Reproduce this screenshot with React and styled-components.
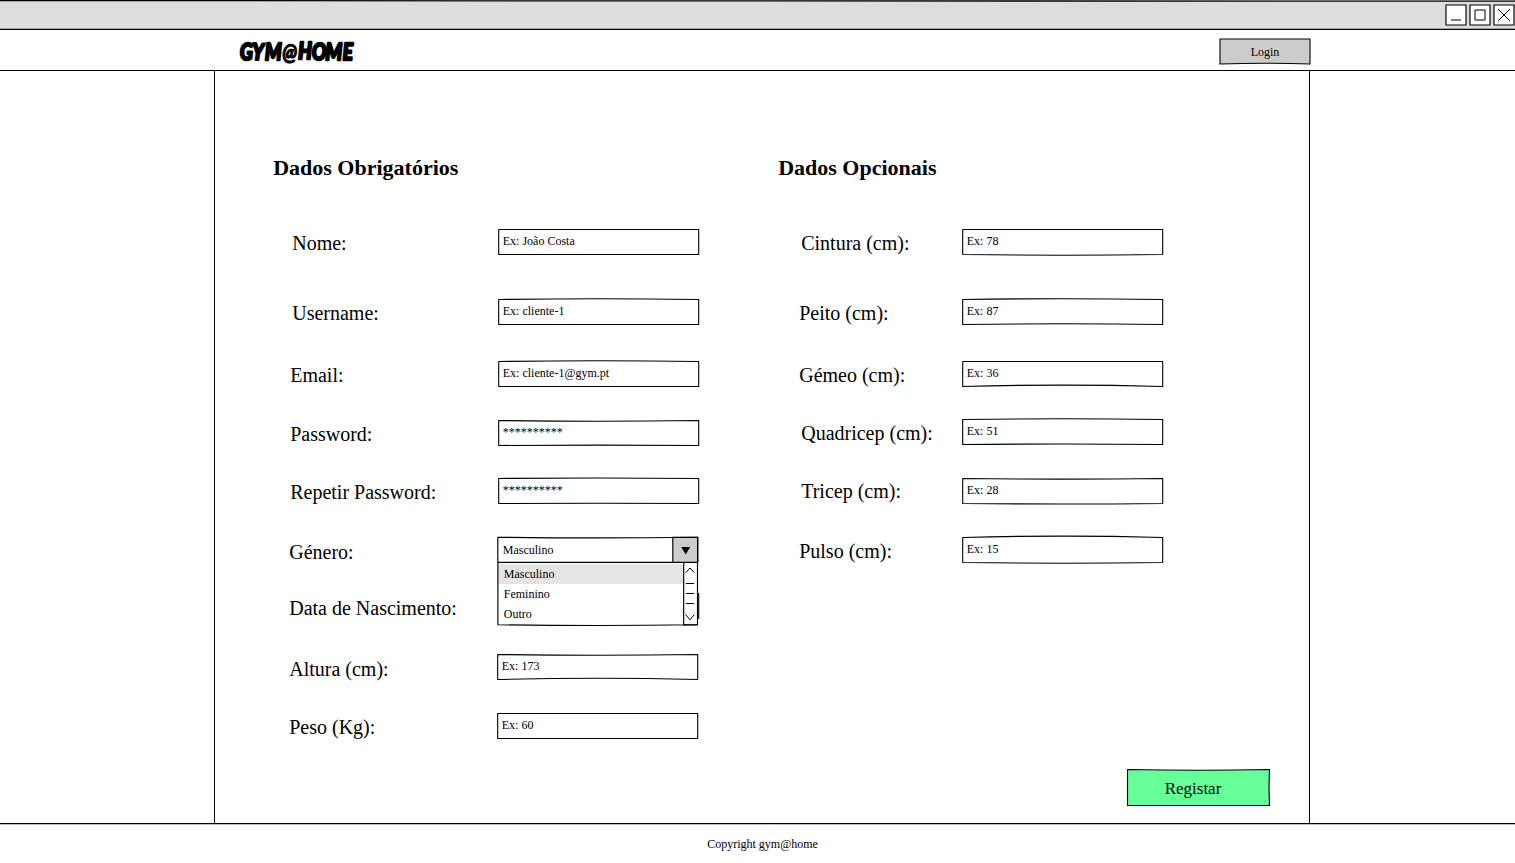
import React from "react";
import styled, { createGlobalStyle } from "styled-components";

const GlobalStyle = createGlobalStyle`
  * { box-sizing: border-box; }
  body {
    margin: 0;
    background: #fff;
    color: #000;
    font-family: "Liberation Serif", "Times New Roman", serif;
    overflow: hidden;
  }
`;

const Page = styled.div`
  display: flex;
  flex-direction: column;
  width: 1515px;
  height: 863px;
`;

const TitleBar = styled.div`
  position: relative;
  flex: none;
  display: flex;
  justify-content: flex-end;
  gap: 2px;
  height: 30px;
  padding-top: 4px;
  background: #ddd;
`;

const Ink = styled.svg`
  position: absolute;
  inset: 0;
  width: 100%;
  height: 100%;
  overflow: visible;
  pointer-events: none;
  fill: none;
  stroke: #000;
  stroke-width: ${(p) => p.$weight || 1};
`;

const WindowButton = styled.button`
  position: relative;
  width: 22px;
  height: 22px;
  padding: 0;
  border: 0;
  background: none;

  svg {
    display: block;
    fill: none;
    stroke: #000;
    stroke-width: 1.15;
  }
`;

const Header = styled.header`
  flex: none;
  display: flex;
  justify-content: space-between;
  height: 41px;
  padding: 8px 204px 0 239px;
  border-bottom: 1px solid #000;
`;

const Logo = styled.svg`
  display: block;
  width: 120px;
  height: 30px;
  overflow: visible;
  font: italic 700 22.5px Lato, sans-serif;
  stroke: #000;
  stroke-width: 2.6px;
  stroke-linejoin: round;
  stroke-linecap: round;
`;

const LogoAt = styled.tspan`
  font-size: 23px;
  stroke-width: 1.2px;
`;

const SketchButton = styled.button`
  position: relative;
  width: ${(p) => p.$w}px;
  height: ${(p) => p.$h}px;
  margin-right: ${(p) => p.$mr || 0}px;
  padding: ${(p) => p.$pad};
  border: 0;
  background: none;
  color: #000;
  font: ${(p) => p.$size}px/20px "Liberation Serif", serif;

  span { position: relative; }
`;

const Main = styled.main`
  flex: none;
  display: flex;
  flex-direction: column;
  width: 1096px;
  height: 753px;
  margin-left: 214px;
  padding: 84px 40px 0 58.2px;
  border: solid #000;
  border-width: 0 1px;
`;

const Columns = styled.div`
  display: flex;
  height: 614px;
`;

const Column = styled.section`
  width: ${(p) => p.$w}px;
`;

const Heading = styled.h2`
  height: 26px;
  margin: 0 0 48px;
  font-size: 22px;
  line-height: 26px;
`;

const Row = styled.div`
  display: flex;
  height: 26px;
  margin-bottom: ${(p) => p.$after}px;
`;

const Label = styled.label`
  flex: none;
  width: ${(p) => p.$w}px;
  padding-left: ${(p) => p.$indent}px;
  padding-top: ${(p) => p.$drop}px;
  font-size: 20px;
  line-height: 26px;
  white-space: nowrap;
`;

const Field = styled.div`
  position: relative;
  flex: none;
  width: 201px;
  height: 26px;
  padding-left: 4.6px;
  font-size: 12px;
  line-height: 24px;

  > span { position: relative; }
`;

const SelectText = styled.span`
  display: block;
  padding-left: 1px;
  line-height: 26px;
`;

const Menu = styled.div`
  position: absolute;
  z-index: 2;
  top: 25px;
  left: 0;
  display: flex;
  width: 201px;
  height: 64px;
  padding: 2px 1px 1px;
  background: #fff;
`;

const Options = styled.div`
  width: 186px;
`;

const Option = styled.div`
  height: 20px;
  padding-left: 5.6px;
  line-height: 20px;
  background: ${(p) => (p.$active ? "#e4e4e4" : "#fff")};
`;

const Footer = styled.footer`
  position: relative;
  flex: 1;
  padding: 10px 0 0 10px;
  text-align: center;
  font-size: 12px;
  line-height: 20px;
`;

const FormActions = styled.div`
  display: flex;
  justify-content: flex-end;
`;

/* A rectangle whose top and bottom edges bow slightly, like a pen stroke. */
function SketchFrame({ w, h, top = 0, bottom = 0, right = 0, fill = "none", x = 0.5, y = 0.5, weight }) {
  const x1 = x + w - 1;
  const y1 = y + h - 1;
  const cx = x + (w - 1) / 2;
  const cy = y + (h - 1) / 2;
  return (
    <Ink viewBox={`0 0 ${w} ${h}`} preserveAspectRatio="xMinYMin slice" $weight={weight}>
      <path
        fill={fill}
        strokeLinejoin="round"
        d={`M${x} ${y}Q${cx} ${y + top * 2} ${x1} ${y}Q${x1 + right * 2} ${cy} ${x1} ${y1}Q${cx} ${y1 + bottom * 2} ${x} ${y1}Z`}
      />
    </Ink>
  );
}

const required = [
  { label: "Nome:", value: "Ex: João Costa", x: 19, lw: 225, drop: 1, after: 44 },
  { label: "Username:", value: "Ex: cliente-1", x: 19, lw: 225, drop: 1, after: 36, top: -0.8 },
  { label: "Email:", value: "Ex: cliente-1@gym.pt", x: 17, lw: 225, drop: 1, after: 33, top: -0.7 },
  { label: "Password:", value: "**********", x: 17, lw: 225, drop: 1, after: 32, top: 0.7, bottom: -0.4 },
  { label: "Repetir Password:", value: "**********", x: 17, lw: 225, drop: 1, after: 33, top: -0.5, bottom: -0.2 },
  { label: "Género:", value: "Masculino", x: 16, lw: 224, drop: 2, after: 30, select: true },
  { label: "Data de Nascimento:", value: "", x: 16, lw: 224.6, drop: 2, after: 35 },
  { label: "Altura (cm):", value: "Ex: 173", x: 16, lw: 224, drop: 2, after: 33, top: 0.7, bottom: -1.3 },
  { label: "Peso (Kg):", value: "Ex: 60", x: 16, lw: 224, drop: 1, after: 0 },
];

const optional = [
  { label: "Cintura (cm):", value: "Ex: 78", x: 23, lw: 184, drop: 1, after: 44, bottom: 0.7 },
  { label: "Peito (cm):", value: "Ex: 87", x: 21, lw: 184, drop: 1, after: 36, top: -0.8, bottom: -0.7 },
  { label: "Gémeo (cm):", value: "Ex: 36", x: 21, lw: 184, drop: 1, after: 32, bottom: -1.4 },
  { label: "Quadricep (cm):", value: "Ex: 51", x: 23, lw: 184, drop: 1, after: 33, top: -0.7, bottom: -0.5 },
  { label: "Tricep (cm):", value: "Ex: 28", x: 23, lw: 184, drop: 0, after: 33, top: 0.6, bottom: 0.5 },
  { label: "Pulso (cm):", value: "Ex: 15", x: 21, lw: 184, drop: 1, after: 0, top: -1.4, bottom: 0.7 },
];

function GenderSelect({ value }) {
  return (
    <Field>
      <SketchFrame w={201} h={26} x={0.8} y={0.2} top={0.7} weight={1.15} />
      <SelectText>{value}</SelectText>
      <Ink viewBox="0 0 201 26" $weight={1.15}>
        <path d="M175.8 .3H200.6V25.3H175.8Z" fill="#ccc" />
        <path d="M184.2 10H193.2L188.7 17.5Z" fill="#000" stroke="none" />
      </Ink>
      <Menu>
        <Options>
          {["Masculino", "Feminino", "Outro"].map((name, i) => (
            <Option key={name} $active={i === 0}>{name}</Option>
          ))}
        </Options>
        <Ink viewBox="0 0 201 64" $weight={1.15}>
          <path d="M.9 .5H200.5V62.8Q100 64.2 .9 62.8Z" />
          <path d="M186.7 .5V62.8H200.5" />
          <path d="M188.6 10.7L193 6L197.3 10.7M188.6 52.5L193 57.8L197.3 52.5" strokeWidth="1" />
          <path d="M188.8 21.5H197M188.8 31.5H197M188.8 41.5H197" />
        </Ink>
      </Menu>
    </Field>
  );
}

function FormRow({ item }) {
  return (
    <Row $after={item.after}>
      <Label $w={item.lw} $indent={item.x} $drop={item.drop}>{item.label}</Label>
      {item.select ? (
        <GenderSelect value={item.value} />
      ) : (
        <Field>
          <SketchFrame w={201} h={26} x={0.7} top={item.top} bottom={item.bottom} right={item.right} weight={1.1} />
          <span>{item.value}</span>
        </Field>
      )}
    </Row>
  );
}

const windowGlyphs = [
  ["Minimizar", "M6 16H16"],
  ["Maximizar", "M6 6H16V16H6Z"],
  ["Fechar", "M5 5L17 17M17 5L5 17"],
];

export default function App() {
  return (
    <Page>
      <GlobalStyle />
      <TitleBar>
        <Ink viewBox="0 0 1515 30" preserveAspectRatio="none">
          <path d="M0 .6Q757 .2 1515 1.2M0 29.3Q757 29.3 1515 29.3" strokeWidth="1.3" />
        </Ink>
        {windowGlyphs.map(([name, d]) => (
          <WindowButton key={name} aria-label={name}>
            <svg width="22" height="22" viewBox="0 0 22 22">
              <path d="M1 1H21V21H1Z" fill="#fff" />
              <path d={d} strokeWidth="1" />
            </svg>
          </WindowButton>
        ))}
      </TitleBar>
      <Header>
        <Logo viewBox="0 0 120 30">
          <text
            transform="scale(.84 1)"
            x="1.2 15.5 31 51.5 70.5 87 103 123.5"
            y="22.5 21.5 21.5 21.5 21 21.5 21.5 21.5"
            rotate="0 2 0 0 0 0 0 0"
          >
            GYM<LogoAt>@</LogoAt>HOME
          </text>
        </Logo>
        <SketchButton $w={92} $h={27} $pad="0" $size={12}>
          <Ink viewBox="0 0 92 27" $weight={1.1}>
            <path d="M1 1H91V26Q46 24.4 1 26Z" fill="#ccc" />
          </Ink>
          <span>Login</span>
        </SketchButton>
      </Header>
      <Main>
        <Columns>
          <Column $w={505}>
            <Heading>Dados Obrigatórios</Heading>
            {required.map((item) => <FormRow key={item.label} item={item} />)}
          </Column>
          <Column $w={400}>
            <Heading>Dados Opcionais</Heading>
            {optional.map((item) => <FormRow key={item.label} item={item} />)}
          </Column>
        </Columns>
        <FormActions>
          <SketchButton $w={143} $h={37} $mr={-1} $pad="2px 11px 0 0" $size={17}>
            <SketchFrame w={143} h={37} top={0.8} right={-0.5} fill="#66ff99" weight={1.1} />
            <span>Registar</span>
          </SketchButton>
        </FormActions>
      </Main>
      <Footer>
        <Ink viewBox="0 0 1515 39" preserveAspectRatio="none" $weight={1.1}>
          <path d="M0 -.4Q757 2.5 1515 -.4" />
        </Ink>
        Copyright gym@home
      </Footer>
    </Page>
  );
}
